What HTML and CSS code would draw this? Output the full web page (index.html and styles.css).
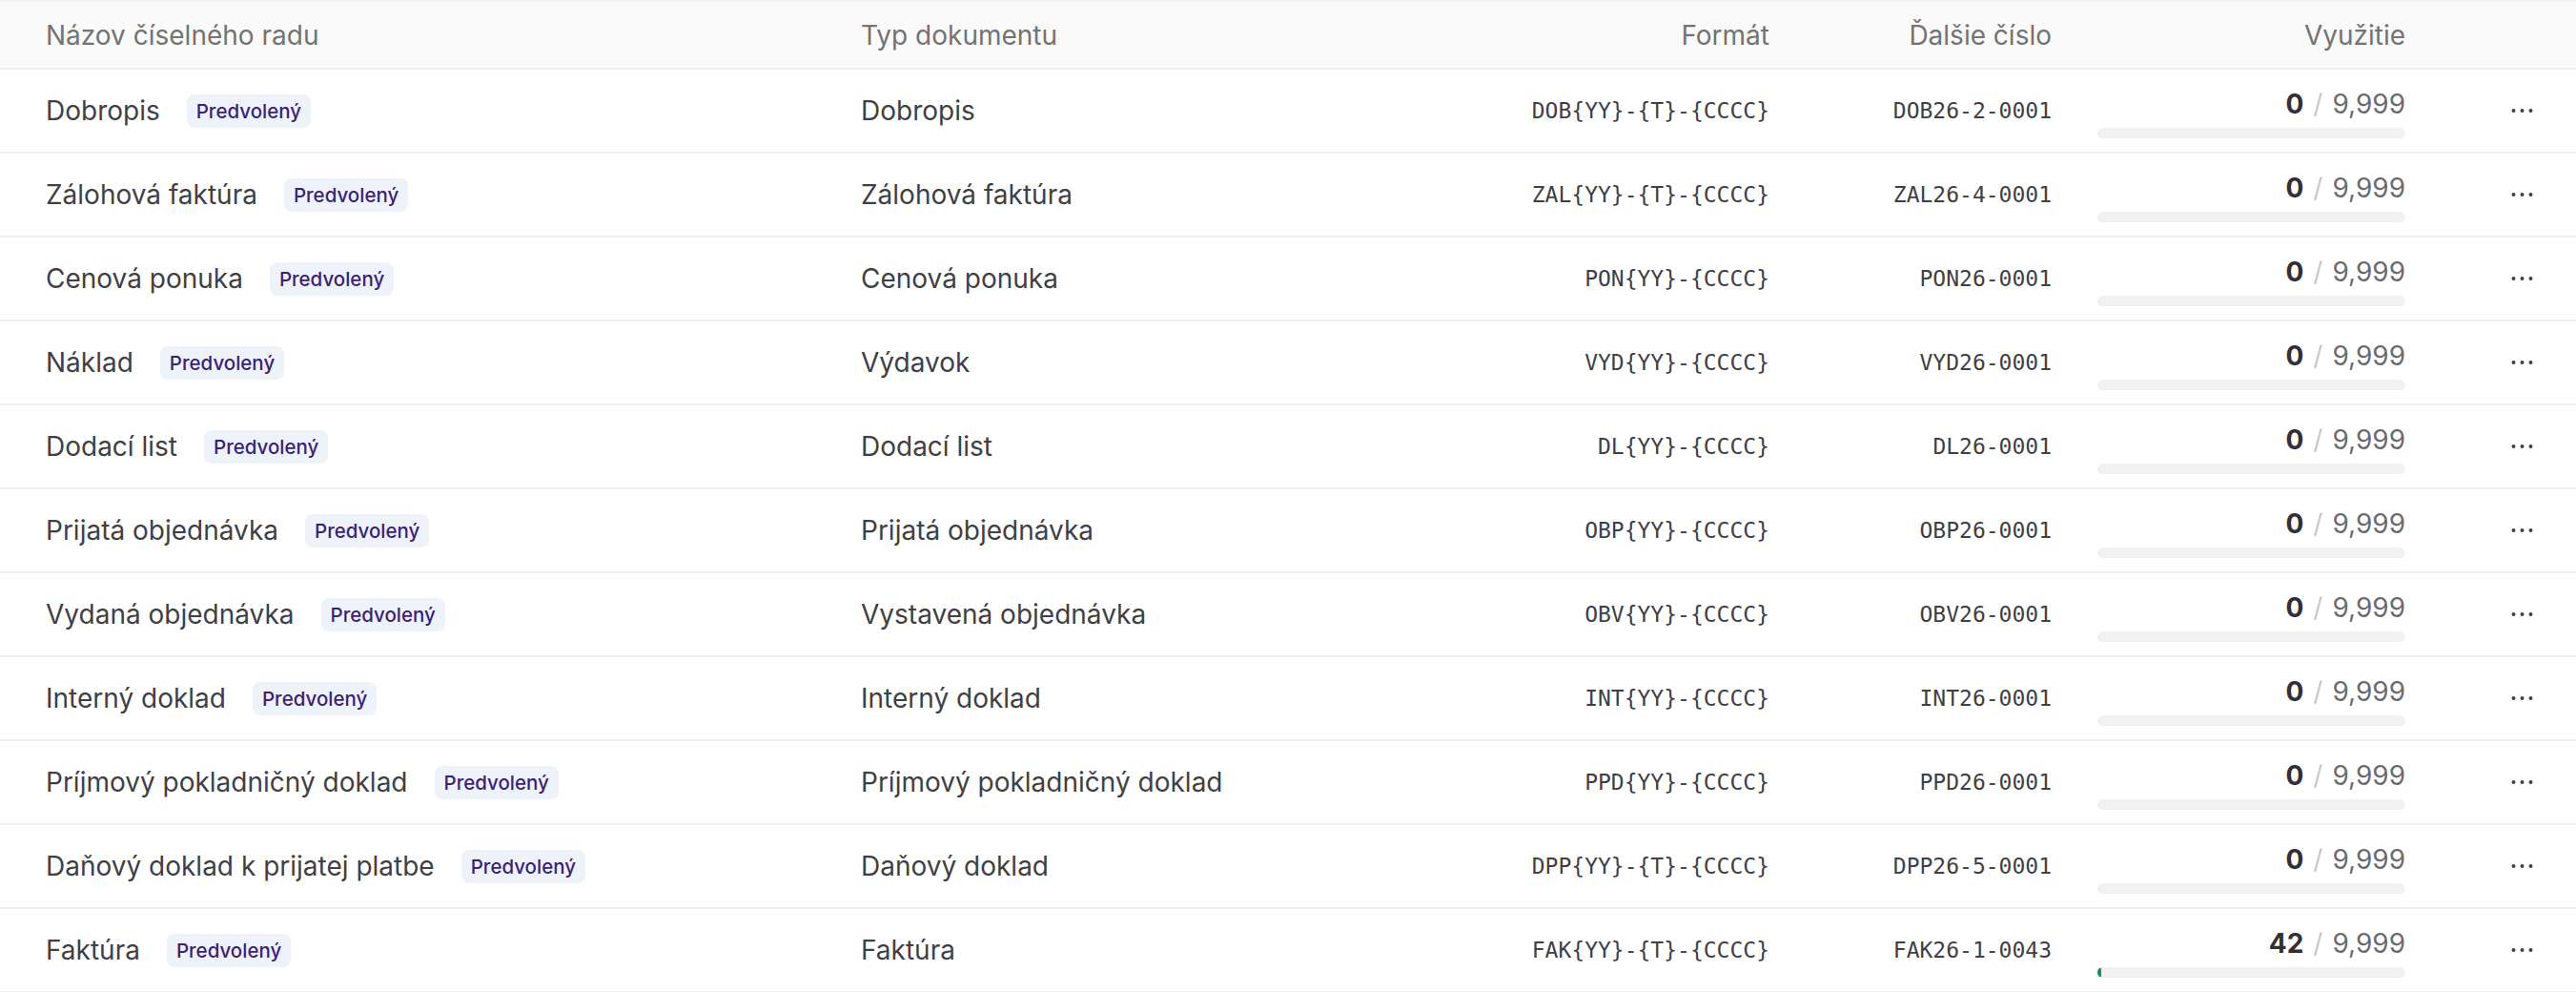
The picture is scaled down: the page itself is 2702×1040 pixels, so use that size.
FILE: index.html
```html
<!DOCTYPE html>
<html lang="sk">
<head>
<meta charset="utf-8">
<title>Číselné rady</title>
<link rel="stylesheet" href="styles.css">
</head>
<body>
<div class="table">
  <div class="row head">
    <div class="c name">Názov číselného radu</div>
    <div class="c type">Typ dokumentu</div>
    <div class="c fmt">Formát</div>
    <div class="c next">Ďalšie číslo</div>
    <div class="c use">Využitie</div>
    <div class="c act"></div>
  </div>

  <div class="row">
    <div class="c name">Dobropis<span class="badge">Predvolený</span></div>
    <div class="c type">Dobropis</div>
    <div class="c fmt mono">DOB{YY}-{T}-{CCCC}</div>
    <div class="c next mono">DOB26-2-0001</div>
    <div class="c use"><div class="num"><b>0</b><span class="sl">/</span><span class="max">9,999</span></div><div class="bar"></div></div>
    <div class="c act"><svg class="dots" viewBox="0 0 24 8"><circle cx="3" cy="4" r="2"/><circle cx="12" cy="4" r="2"/><circle cx="21" cy="4" r="2"/></svg></div>
  </div>

  <div class="row">
    <div class="c name">Zálohová faktúra<span class="badge">Predvolený</span></div>
    <div class="c type">Zálohová faktúra</div>
    <div class="c fmt mono">ZAL{YY}-{T}-{CCCC}</div>
    <div class="c next mono">ZAL26-4-0001</div>
    <div class="c use"><div class="num"><b>0</b><span class="sl">/</span><span class="max">9,999</span></div><div class="bar"></div></div>
    <div class="c act"><svg class="dots" viewBox="0 0 24 8"><circle cx="3" cy="4" r="2"/><circle cx="12" cy="4" r="2"/><circle cx="21" cy="4" r="2"/></svg></div>
  </div>

  <div class="row">
    <div class="c name">Cenová ponuka<span class="badge">Predvolený</span></div>
    <div class="c type">Cenová ponuka</div>
    <div class="c fmt mono">PON{YY}-{CCCC}</div>
    <div class="c next mono">PON26-0001</div>
    <div class="c use"><div class="num"><b>0</b><span class="sl">/</span><span class="max">9,999</span></div><div class="bar"></div></div>
    <div class="c act"><svg class="dots" viewBox="0 0 24 8"><circle cx="3" cy="4" r="2"/><circle cx="12" cy="4" r="2"/><circle cx="21" cy="4" r="2"/></svg></div>
  </div>

  <div class="row">
    <div class="c name">Náklad<span class="badge">Predvolený</span></div>
    <div class="c type">Výdavok</div>
    <div class="c fmt mono">VYD{YY}-{CCCC}</div>
    <div class="c next mono">VYD26-0001</div>
    <div class="c use"><div class="num"><b>0</b><span class="sl">/</span><span class="max">9,999</span></div><div class="bar"></div></div>
    <div class="c act"><svg class="dots" viewBox="0 0 24 8"><circle cx="3" cy="4" r="2"/><circle cx="12" cy="4" r="2"/><circle cx="21" cy="4" r="2"/></svg></div>
  </div>

  <div class="row">
    <div class="c name">Dodací list<span class="badge">Predvolený</span></div>
    <div class="c type">Dodací list</div>
    <div class="c fmt mono">DL{YY}-{CCCC}</div>
    <div class="c next mono">DL26-0001</div>
    <div class="c use"><div class="num"><b>0</b><span class="sl">/</span><span class="max">9,999</span></div><div class="bar"></div></div>
    <div class="c act"><svg class="dots" viewBox="0 0 24 8"><circle cx="3" cy="4" r="2"/><circle cx="12" cy="4" r="2"/><circle cx="21" cy="4" r="2"/></svg></div>
  </div>

  <div class="row">
    <div class="c name">Prijatá objednávka<span class="badge">Predvolený</span></div>
    <div class="c type">Prijatá objednávka</div>
    <div class="c fmt mono">OBP{YY}-{CCCC}</div>
    <div class="c next mono">OBP26-0001</div>
    <div class="c use"><div class="num"><b>0</b><span class="sl">/</span><span class="max">9,999</span></div><div class="bar"></div></div>
    <div class="c act"><svg class="dots" viewBox="0 0 24 8"><circle cx="3" cy="4" r="2"/><circle cx="12" cy="4" r="2"/><circle cx="21" cy="4" r="2"/></svg></div>
  </div>

  <div class="row">
    <div class="c name">Vydaná objednávka<span class="badge">Predvolený</span></div>
    <div class="c type">Vystavená objednávka</div>
    <div class="c fmt mono">OBV{YY}-{CCCC}</div>
    <div class="c next mono">OBV26-0001</div>
    <div class="c use"><div class="num"><b>0</b><span class="sl">/</span><span class="max">9,999</span></div><div class="bar"></div></div>
    <div class="c act"><svg class="dots" viewBox="0 0 24 8"><circle cx="3" cy="4" r="2"/><circle cx="12" cy="4" r="2"/><circle cx="21" cy="4" r="2"/></svg></div>
  </div>

  <div class="row">
    <div class="c name">Interný doklad<span class="badge">Predvolený</span></div>
    <div class="c type">Interný doklad</div>
    <div class="c fmt mono">INT{YY}-{CCCC}</div>
    <div class="c next mono">INT26-0001</div>
    <div class="c use"><div class="num"><b>0</b><span class="sl">/</span><span class="max">9,999</span></div><div class="bar"></div></div>
    <div class="c act"><svg class="dots" viewBox="0 0 24 8"><circle cx="3" cy="4" r="2"/><circle cx="12" cy="4" r="2"/><circle cx="21" cy="4" r="2"/></svg></div>
  </div>

  <div class="row">
    <div class="c name">Príjmový pokladničný doklad<span class="badge">Predvolený</span></div>
    <div class="c type">Príjmový pokladničný doklad</div>
    <div class="c fmt mono">PPD{YY}-{CCCC}</div>
    <div class="c next mono">PPD26-0001</div>
    <div class="c use"><div class="num"><b>0</b><span class="sl">/</span><span class="max">9,999</span></div><div class="bar"></div></div>
    <div class="c act"><svg class="dots" viewBox="0 0 24 8"><circle cx="3" cy="4" r="2"/><circle cx="12" cy="4" r="2"/><circle cx="21" cy="4" r="2"/></svg></div>
  </div>

  <div class="row">
    <div class="c name">Daňový doklad k prijatej platbe<span class="badge">Predvolený</span></div>
    <div class="c type">Daňový doklad</div>
    <div class="c fmt mono">DPP{YY}-{T}-{CCCC}</div>
    <div class="c next mono">DPP26-5-0001</div>
    <div class="c use"><div class="num"><b>0</b><span class="sl">/</span><span class="max">9,999</span></div><div class="bar"></div></div>
    <div class="c act"><svg class="dots" viewBox="0 0 24 8"><circle cx="3" cy="4" r="2"/><circle cx="12" cy="4" r="2"/><circle cx="21" cy="4" r="2"/></svg></div>
  </div>

  <div class="row">
    <div class="c name">Faktúra<span class="badge">Predvolený</span></div>
    <div class="c type">Faktúra</div>
    <div class="c fmt mono">FAK{YY}-{T}-{CCCC}</div>
    <div class="c next mono">FAK26-1-0043</div>
    <div class="c use"><div class="num"><b>42</b><span class="sl">/</span><span class="max">9,999</span></div><div class="bar"><div class="fill" style="width:0.42%"></div></div></div>
    <div class="c act"><svg class="dots" viewBox="0 0 24 8"><circle cx="3" cy="4" r="2"/><circle cx="12" cy="4" r="2"/><circle cx="21" cy="4" r="2"/></svg></div>
  </div>
</div>
</body>
</html>
```

FILE: styles.css
```css
html, body {
  margin: 0;
  padding: 0;
  background: #ffffff;
}

body {
  font-family: Inter, "Noto Sans", "Liberation Sans", sans-serif;
  font-size: 28px;
  color: #3f3f46;
}

.table {
  width: 2702px;
  border-top: 2px solid #f2f2f2;
}

.row {
  display: grid;
  grid-template-columns: 855px 500px 453px 296px 371px 1fr;
  height: 86px;
  padding-left: 48px;
  border-bottom: 2px solid #f0f0f0;
  align-items: center;
}

.row.head {
  height: 69px;
  background: #fafafa;
  color: #737373;
}

.c {
  display: flex;
  align-items: center;
  white-space: nowrap;
}

.fmt, .next, .use {
  justify-content: flex-end;
}

.mono {
  font-family: "DejaVu Sans Mono", "Liberation Mono", monospace;
  font-size: 23px;
  color: #3f3f46;
}

.badge {
  margin-left: 28px;
  padding: 0 10px;
  height: 35px;
  line-height: 35px;
  border-radius: 8px;
  background: #eef2fb;
  color: #3b2275;
  font-size: 20.5px;
  font-weight: 500;
}

.use {
  flex-direction: column;
  align-items: flex-end;
  padding-left: 48px;
  padding-top: 4px;
}

.row.head .use {
  padding-top: 0;
}

.num {
  line-height: 34px;
}

.num b {
  font-weight: 700;
  color: #303036;
}

.sl {
  color: #c9c9c9;
  margin: 0 10px;
}

.max {
  color: #6b6b70;
}

.bar {
  width: 100%;
  height: 11px;
  margin-top: 8px;
  border-radius: 6px;
  background: #f1f1f1;
  overflow: hidden;
}

.fill {
  height: 100%;
  min-width: 4px;
  border-radius: 6px;
  background: #14925f;
}

.act {
  justify-content: flex-end;
  padding-right: 44px;
}

.dots {
  width: 25px;
  height: 8px;
  fill: #3f3f46;
}
```
